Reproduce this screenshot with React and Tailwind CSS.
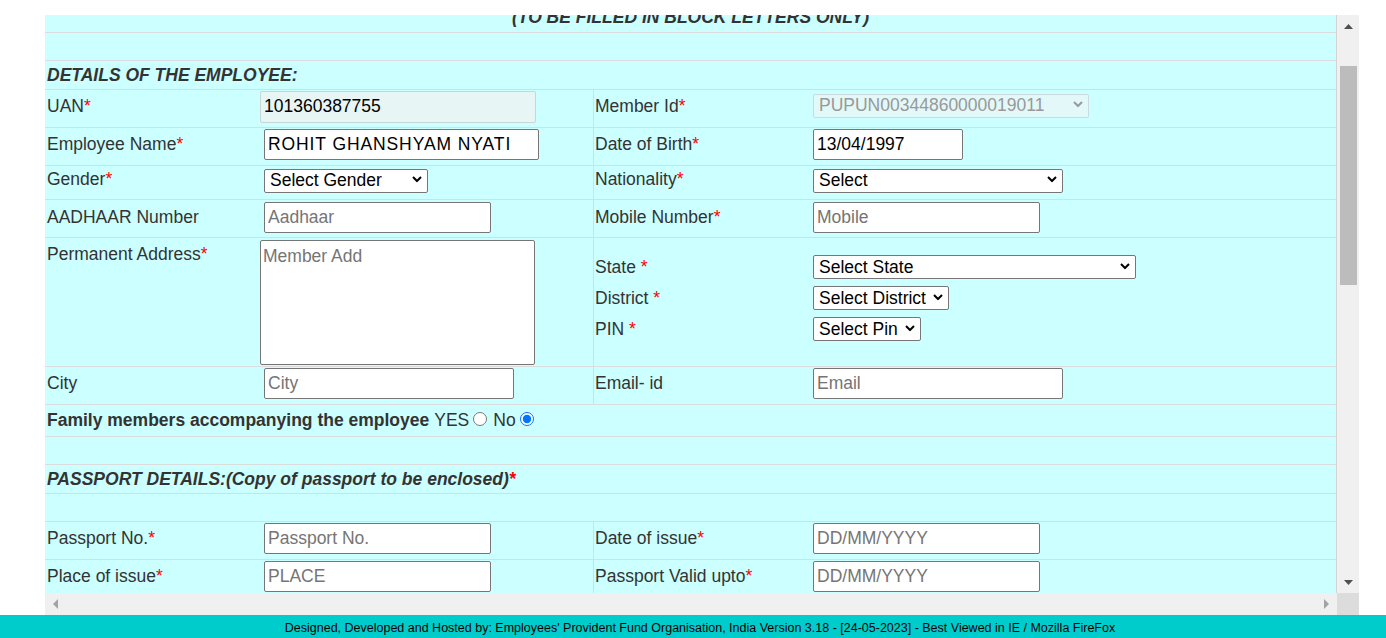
import React from "react";

const Req = () => <span className="text-[#ff0000]">*</span>;

function Chevron({ color = "#000" }) {
  return (
    <svg width="10" height="7" viewBox="0 0 10 7" className="absolute right-[6px] top-1/2 -translate-y-1/2 pointer-events-none">
      <path d="M1 1.5l4 4 4-4" fill="none" stroke={color} strokeWidth="2" />
    </svg>
  );
}

function Select({ text, w, disabled }) {
  return (
    <div className={`relative h-[24px] ${w}`}>
      <select
        disabled={disabled}
        className={
          disabled
            ? "appearance-none w-full h-full border border-[#c9dcdc] rounded-[2px] bg-[#e3f8f8] pl-[5px] pb-[1px] text-[17.5px] leading-[20px] text-[#999]"
            : "appearance-none w-full h-full border border-[#767676] rounded-[2px] bg-white pl-[5px] pb-[1px] text-[17.5px] leading-[20px] text-black"
        }
      >
        <option>{text}</option>
      </select>
      <Chevron color={disabled ? "#9a9a9a" : "#000"} />
    </div>
  );
}

function TextInput({ w, value, placeholder, extra = "" }) {
  return (
    <input
      readOnly
      value={value || ""}
      placeholder={placeholder}
      className={`${w} h-[31px] border border-[#767676] rounded-[2px] bg-white px-[3px] text-[17.5px] text-black placeholder:text-[#757575] ${extra}`}
    />
  );
}

function Row({ h, children }) {
  return <div className={`flex border-t border-[#dcdcdc] ${h}`}>{children}</div>;
}

function FieldRow({ h = "h-[38px]", pb = "pb-[4px]", l1, c1, c1pad = "pl-[6px]", l2, c2 }) {
  return (
    <Row h={h}>
      <div className={`w-[213px] flex items-center pl-[2px] ${pb}`}>{l1}</div>
      <div className={`w-[335px] flex items-center ${c1pad} ${pb}`}>{c1}</div>
      <div className={`w-[218px] flex items-center pl-[1px] border-l border-[#dcdcdc] ${pb}`}>{l2}</div>
      <div className={`flex-1 flex items-center pl-[2px] ${pb}`}>{c2}</div>
    </Row>
  );
}

function Tri({ dir, color }) {
  const pts = {
    up: "0,5 4.5,0 9,5",
    down: "0,0 4.5,5 9,0",
    left: "5,0 0,5 5,10",
    right: "0,0 5,5 0,10",
  }[dir];
  const vertical = dir === "up" || dir === "down";
  return (
    <svg width={vertical ? 9 : 5} height={vertical ? 5 : 10}>
      <polygon points={pts} fill={color} />
    </svg>
  );
}

export default function App() {
  return (
    <div className="min-h-screen bg-white flex flex-col font-['Liberation_Sans',Arial,sans-serif] text-[17.5px] text-[#333]">
      <div className="pt-[15px] pl-[45px]">
        <div className="w-[1314px] flex flex-col">
          <div className="flex h-[578px]">
            <div className="w-[1292px] overflow-hidden bg-[#ccffff] border-r border-[#d4d4d4]">
              <div className="-mt-[12px]">
                <div className="h-[29px] flex items-center justify-center font-bold italic">
                  (TO BE FILLED IN BLOCK LETTERS ONLY)
                </div>
                <Row h="h-[28px]" />
                <Row h="h-[29px]">
                  <div className="flex items-center pl-[2px] font-bold italic">DETAILS OF THE EMPLOYEE:</div>
                </Row>
                <Row h="h-[38px]">
                  <div className="w-[213px] flex items-center pl-[2px] pb-[5px]">
                    <span>UAN<Req /></span>
                  </div>
                  <div className="w-[335px] flex items-center pl-[2px] pb-[4px]">
                    <input
                      readOnly
                      value="101360387755"
                      className="w-[276px] h-[32px] border border-[#c9d6d6] rounded-[2px] bg-[#e8f5f5] px-[3px] text-[17.5px] text-black"
                    />
                  </div>
                  <div className="w-[218px] flex items-center pl-[1px] border-l border-[#dcdcdc] pb-[5px]">
                    <span>Member Id<Req /></span>
                  </div>
                  <div className="flex-1 flex items-start pl-[2px] pt-[2px]">
                    <Select text="PUPUN00344860000019011" w="w-[276px]" disabled />
                  </div>
                </Row>
                <FieldRow
                  l1={<span>Employee Name<Req /></span>}
                  c1={<TextInput w="w-[275px]" value="ROHIT GHANSHYAM NYATI" extra="tracking-[0.9px]" />}
                  l2={<span>Date of Birth<Req /></span>}
                  c2={<TextInput w="w-[150px]" value="13/04/1997" />}
                />
                <FieldRow
                  h="h-[34px]"
                  pb="pb-[7px]"
                  l1={<span>Gender<Req /></span>}
                  c1={<Select text="Select Gender" w="w-[164px]" />}
                  l2={<span>Nationality<Req /></span>}
                  c2={<Select text="Select" w="w-[250px]" />}
                />
                <FieldRow
                  pb="pb-[2px]"
                  l1={<span>AADHAAR Number</span>}
                  c1={<TextInput w="w-[227px]" placeholder="Aadhaar" />}
                  l2={<span>Mobile Number<Req /></span>}
                  c2={<TextInput w="w-[227px]" placeholder="Mobile" />}
                />
                <Row h="h-[129px]">
                  <div className="w-[213px] pl-[2px] pt-[3px]">
                    <span>Permanent Address<Req /></span>
                  </div>
                  <div className="w-[335px] pl-[2px] pt-[2px]">
                    <textarea
                      readOnly
                      placeholder="Member Add"
                      className="w-[275px] h-[125px] resize-none border border-[#767676] rounded-[2px] bg-white p-[2px] text-[17.5px] text-black placeholder:text-[#757575]"
                    />
                  </div>
                  <div className="flex-1 flex border-l border-[#dcdcdc] pt-[14px]">
                    <div className="flex flex-col w-full">
                      {[
                        ["State", "Select State", "w-[323px]"],
                        ["District", "Select District", "w-[136px]"],
                        ["PIN", "Select Pin", "w-[108px]"],
                      ].map(([label, text, w]) => (
                        <div key={label} className="h-[31px] flex items-center">
                          <div className="w-[217px] pl-[1px]">
                            {label} <Req />
                          </div>
                          <div className="pl-[2px] mb-[4px]">
                            <Select text={text} w={w} />
                          </div>
                        </div>
                      ))}
                    </div>
                  </div>
                </Row>
                <FieldRow
                  l1={<span>City</span>}
                  c1={<TextInput w="w-[250px]" placeholder="City" />}
                  l2={<span>Email- id</span>}
                  c2={<TextInput w="w-[250px]" placeholder="Email" />}
                />
                <Row h="h-[32px]">
                  <div className="flex items-center pl-[2px]">
                    <span className="font-bold">Family members accompanying the employee</span>
                    <span className="ml-[5px]">YES</span>
                    <input type="radio" name="fam" className="ml-[4px] mr-[3px] mb-[4px] w-[14px] h-[14px]" />
                    <span className="ml-[3px]">No</span>
                    <input type="radio" name="fam" defaultChecked className="ml-[4px] mb-[4px] w-[14px] h-[14px]" />
                  </div>
                </Row>
                <Row h="h-[28px]" />
                <Row h="h-[29px]">
                  <div className="flex items-center pl-[2px] font-bold italic">
                    <span>
                      PASSPORT DETAILS:(Copy of passport to be enclosed)<Req />
                    </span>
                  </div>
                </Row>
                <Row h="h-[28px]" />
                <FieldRow
                  l1={<span>Passport No.<Req /></span>}
                  c1={<TextInput w="w-[227px]" placeholder="Passport No." />}
                  l2={<span>Date of issue<Req /></span>}
                  c2={<TextInput w="w-[227px]" placeholder="DD/MM/YYYY" />}
                />
                <FieldRow
                  l1={<span>Place of issue<Req /></span>}
                  c1={<TextInput w="w-[227px]" placeholder="PLACE" />}
                  l2={<span>Passport Valid upto<Req /></span>}
                  c2={<TextInput w="w-[227px]" placeholder="DD/MM/YYYY" />}
                />
              </div>
            </div>
            {/* vertical scrollbar */}
            <div className="w-[22px] bg-[#f0f0f0] flex flex-col">
              <div className="h-[22px] flex items-center justify-center">
                <Tri dir="up" color="#505050" />
              </div>
              <div className="flex-1 pt-[29px]">
                <div className="ml-[3px] w-[17px] h-[219px] bg-[#bcbcbc]" />
              </div>
              <div className="h-[22px] flex items-center justify-center">
                <Tri dir="down" color="#505050" />
              </div>
            </div>
          </div>
          {/* horizontal scrollbar */}
          <div className="flex h-[22px]">
            <div className="w-[1292px] bg-[#f0f0f0] flex items-center justify-between px-[8px]">
              <Tri dir="left" color="#a3a3a3" />
              <Tri dir="right" color="#a3a3a3" />
            </div>
            <div className="w-[22px] bg-[#dcdcdc]" />
          </div>
        </div>
      </div>
      <footer className="h-[23px] bg-[#00cccc] flex items-center justify-center pl-[14px] pt-[3px] text-[12.5px] text-black">
        Designed, Developed and Hosted by: Employees' Provident Fund Organisation, India Version 3.18 - [24-05-2023] - Best Viewed in IE / Mozilla FireFox
      </footer>
    </div>
  );
}
